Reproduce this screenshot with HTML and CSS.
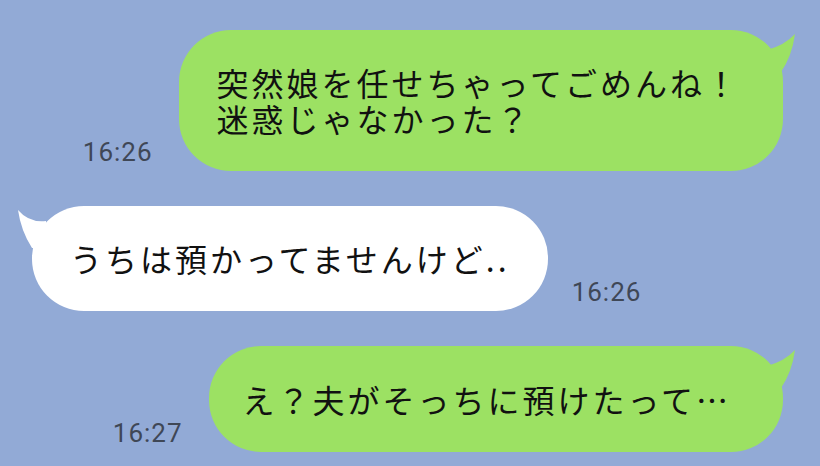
FILE: index.html
```html
<!DOCTYPE html>
<html lang="ja">
<head>
    <meta charset="UTF-8">
    <meta name="viewport" content="width=device-width, initial-scale=1.0">
    <title>トーク</title>
    <link rel="stylesheet" href="styles.css">
</head>
<body>

    <div class="chat">
        <!-- sent -->
        <div class="row row-sent">
            <span class="time">16:26</span>
            <div class="bubble bubble-sent bubble-two-lines">
                <svg class="tail tail-right" viewBox="0 0 30 45" width="30" height="45"><path d="M0 20 Q 18 15 28 4 Q 25 26 14 42 L 0 42 Z"/></svg>
                <p>突然娘を任せちゃってごめんね！</p>
                <p>迷惑じゃなかった？</p>
            </div>
        </div>

        <!-- received -->
        <div class="row row-received">
            <div class="bubble bubble-received">
                <svg class="tail tail-left" viewBox="0 0 30 45" width="30" height="45"><path d="M30 15 Q 13 17 2 4 Q 5 25 16 42 L 30 42 Z"/></svg>
                <p>うちは預かってませんけど..</p>
            </div>
            <span class="time">16:26</span>
        </div>

        <!-- sent -->
        <div class="row row-sent">
            <span class="time">16:27</span>
            <div class="bubble bubble-sent bubble-last">
                <svg class="tail tail-right" viewBox="0 0 30 45" width="30" height="45"><path d="M0 20 Q 18 15 28 4 Q 25 26 14 42 L 0 42 Z"/></svg>
                <p>え？夫がそっちに預けたって…</p>
            </div>
        </div>
    </div>

</body>
</html>
```

FILE: styles.css
```css
body {
    margin: 0;
    background-color: #92aad6;
    font-family: "Noto Sans CJK JP", sans-serif;
    overflow: hidden;
}
.chat {
    display: flex;
    flex-direction: column;
    gap: 35px;
    padding: 30px 37px 0 32px;
}
.row {
    display: flex;
    align-items: flex-end;
}
.row-sent { justify-content: flex-end; gap: 26px; }
.row-received { justify-content: flex-start; gap: 24px; }
.time {
    font-family: Roboto, "Liberation Sans", sans-serif;
    font-size: 26px;
    letter-spacing: 1px;
    color: #3f4756;
    line-height: 1;
    padding-bottom: 6px;
}
.bubble {
    position: relative;
    border-radius: 52px;
}
.bubble p {
    margin: 0;
    font-size: 32px;
    line-height: 36px;
    height: 36px;
    letter-spacing: 3px;
    color: #111;
    white-space: nowrap;
}
.bubble-two-lines p { line-height: 35px; height: 35px; }
.bubble-two-lines p + p { margin-top: 1px; }
.bubble-sent {
    background: #9ce163;
    padding: 35px 45px 35px 38px;
}
.bubble-two-lines { padding-right: 43px; }
.bubble-last { padding-left: 34px; padding-right: 52px; }
.bubble-received {
    background: #fff;
    padding: 34px 38px 35px 38px;
}
.tail { position: absolute; top: 0; }
.tail-right { right: -14px; fill: #9ce163; }
.tail-left { left: -16px; fill: #fff; }
```
